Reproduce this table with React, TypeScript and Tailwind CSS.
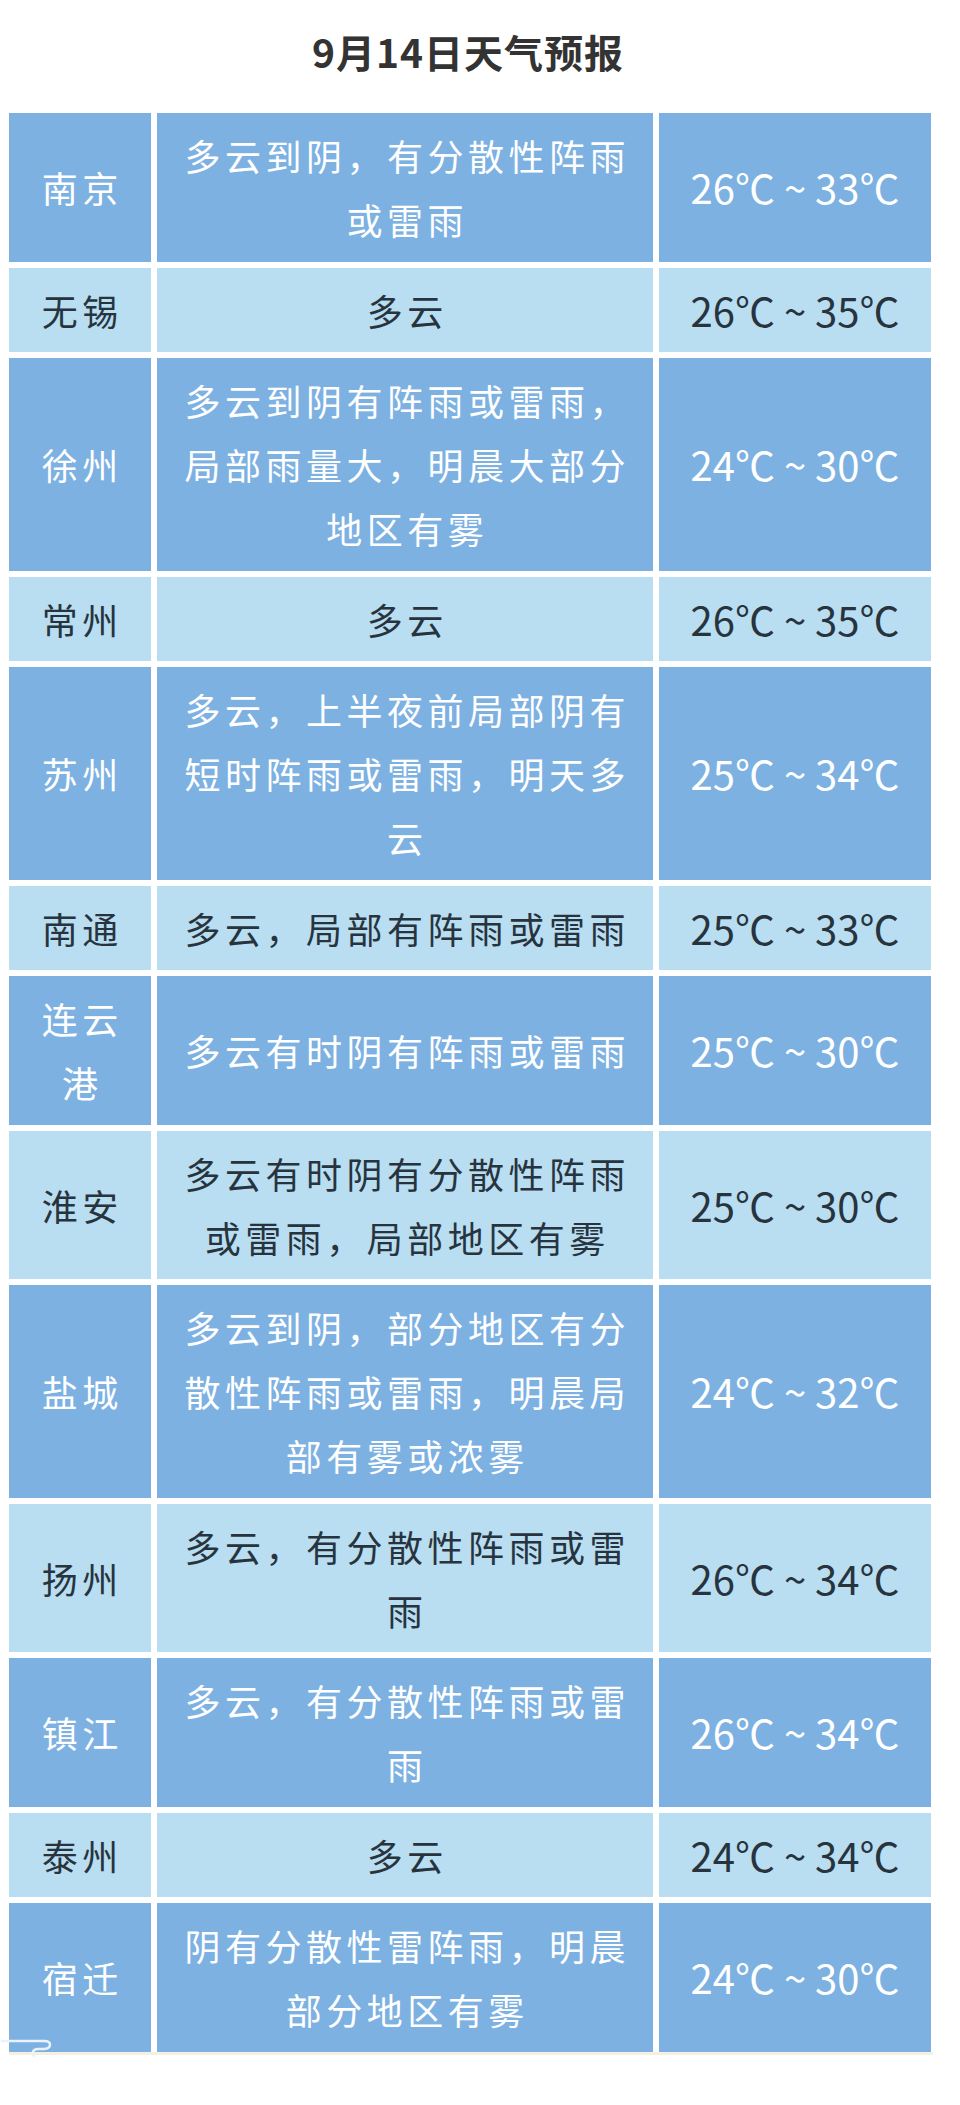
import React from 'react';

type Row = {
  city: string[];
  desc: string[];
  temp: string;
};

const rows: Row[] = [
  { city: ['南京'], desc: ['多云到阴，有分散性阵雨', '或雷雨'], temp: '26℃ ~ 33℃' },
  { city: ['无锡'], desc: ['多云'], temp: '26℃ ~ 35℃' },
  { city: ['徐州'], desc: ['多云到阴有阵雨或雷雨，', '局部雨量大，明晨大部分', '地区有雾'], temp: '24℃ ~ 30℃' },
  { city: ['常州'], desc: ['多云'], temp: '26℃ ~ 35℃' },
  { city: ['苏州'], desc: ['多云，上半夜前局部阴有', '短时阵雨或雷雨，明天多', '云'], temp: '25℃ ~ 34℃' },
  { city: ['南通'], desc: ['多云，局部有阵雨或雷雨'], temp: '25℃ ~ 33℃' },
  { city: ['连云', '港'], desc: ['多云有时阴有阵雨或雷雨'], temp: '25℃ ~ 30℃' },
  { city: ['淮安'], desc: ['多云有时阴有分散性阵雨', '或雷雨，局部地区有雾'], temp: '25℃ ~ 30℃' },
  { city: ['盐城'], desc: ['多云到阴，部分地区有分', '散性阵雨或雷雨，明晨局', '部有雾或浓雾'], temp: '24℃ ~ 32℃' },
  { city: ['扬州'], desc: ['多云，有分散性阵雨或雷', '雨'], temp: '26℃ ~ 34℃' },
  { city: ['镇江'], desc: ['多云，有分散性阵雨或雷', '雨'], temp: '26℃ ~ 34℃' },
  { city: ['泰州'], desc: ['多云'], temp: '24℃ ~ 34℃' },
  { city: ['宿迁'], desc: ['阴有分散性雷阵雨，明晨', '部分地区有雾'], temp: '24℃ ~ 30℃' },
];

const Lines: React.FC<{ lines: string[] }> = ({ lines }) => (
  <div className="flex flex-col items-center">
    {lines.map((l, i) => (
      <span key={i} className="block whitespace-nowrap tracking-[4.5px] pl-[4.5px]">
        {l}
      </span>
    ))}
  </div>
);

const App: React.FC = () => {
  return (
    <div className="relative w-[960px] min-h-[2105px] bg-white font-['Noto_Sans_CJK_SC','Noto_Sans',sans-serif]">
      {/* Title */}
      <div className="h-[113px] flex items-center justify-center pb-[10px] pr-[24px]">
        <h1 className="text-[39px] font-bold text-[#333333] tracking-[1px]">9月14日天气预报</h1>
      </div>

      {/* Table */}
      <div className="ml-[9px] w-[922px] flex flex-col gap-[6px]">
        {rows.map((r, i) => {
          const dark = i % 2 === 0;
          const cell = dark
            ? 'bg-[#7db1e2] text-white'
            : 'bg-[#b9ddf1] text-[#27343e]';
          return (
            <div
              key={i}
              className="grid grid-cols-[142px_496px_272px] gap-x-[6px] text-[36px] leading-[64px]"
            >
              <div className={`${cell} flex items-center justify-center py-[10.25px]`}>
                <Lines lines={r.city} />
              </div>
              <div className={`${cell} flex items-center justify-center py-[10.25px]`}>
                <Lines lines={r.desc} />
              </div>
              <div className={`${cell} flex items-center justify-center py-[10.25px]`}>
                <span className="text-[40px] whitespace-nowrap">{r.temp}</span>
              </div>
            </div>
          );
        })}
      </div>
      <div className="ml-[9px] w-[924px] h-[3px] bg-[#f4f0e2]" />

      {/* small scroll mark at the bottom left */}
      <svg
        className="absolute left-0 top-[2034px]"
        width="60"
        height="24"
        viewBox="0 0 60 24"
        fill="none"
      >
        <path
          d="M2 7 H44 C52 7 52 14 44 15 H38 C32 15 32 20 34 22"
          stroke="#eaf3fb"
          strokeWidth="2.5"
          strokeLinecap="round"
        />
      </svg>
    </div>
  );
};

export default App;
